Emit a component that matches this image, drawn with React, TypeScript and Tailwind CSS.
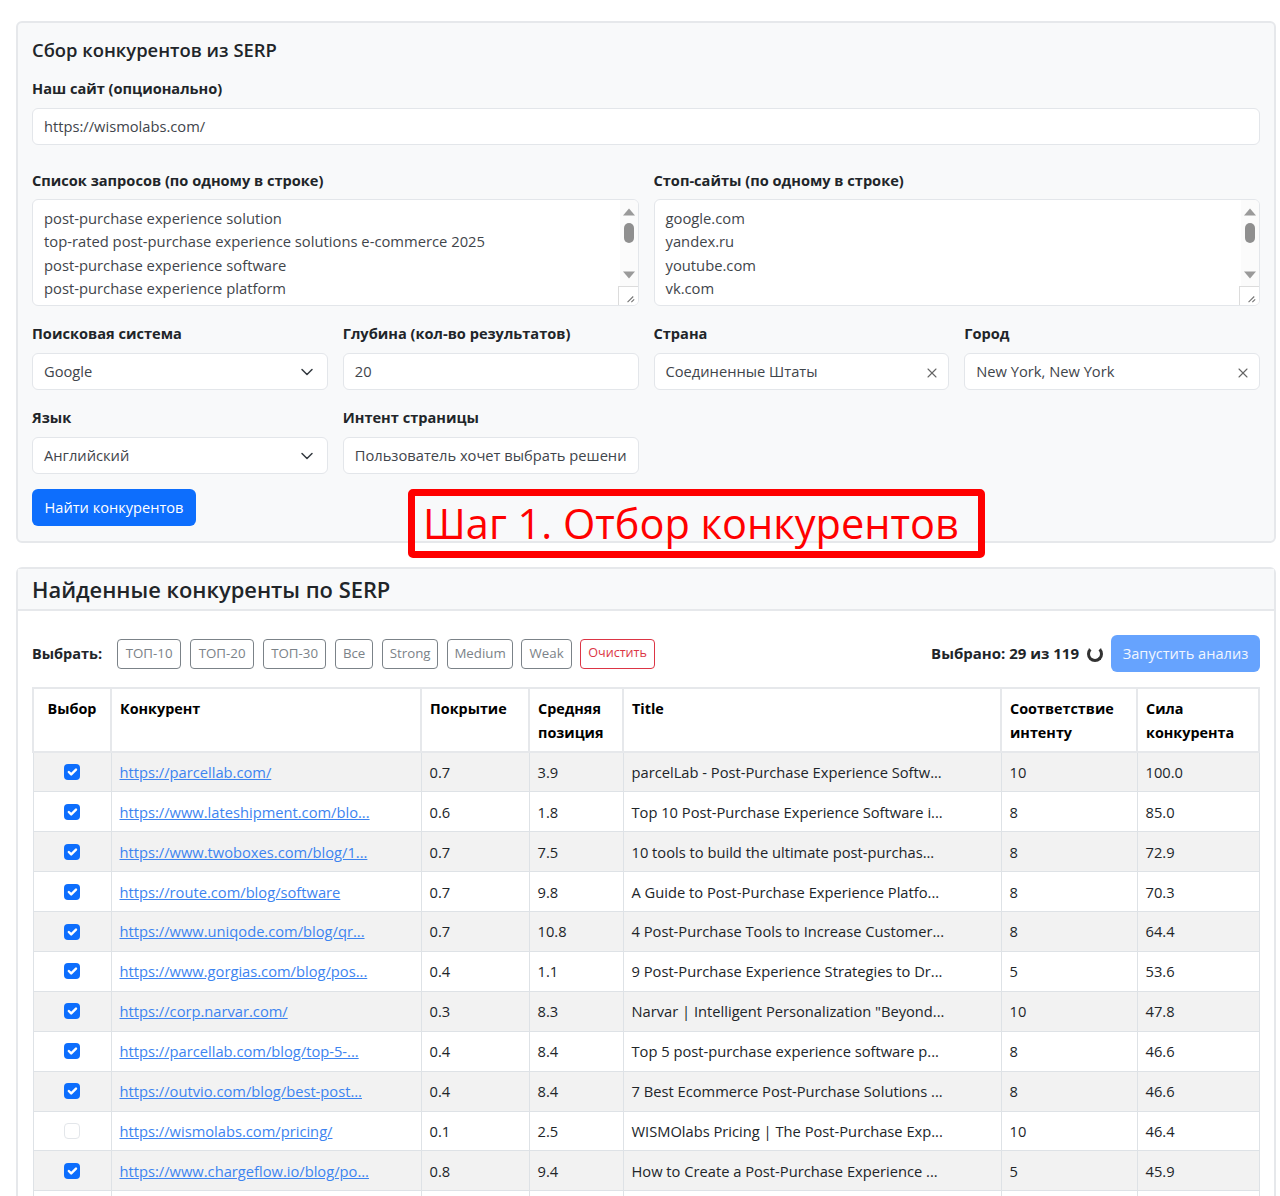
import { ReactNode } from "react";
import { ChevronDown, X } from "lucide-react";

const rows = [
  { on: true, url: "https://parcellab.com/", cov: "0.7", pos: "3.9", title: "parcelLab - Post-Purchase Experience Softw...", fit: "10", power: "100.0" },
  { on: true, url: "https://www.lateshipment.com/blo...", cov: "0.6", pos: "1.8", title: "Top 10 Post-Purchase Experience Software i...", fit: "8", power: "85.0" },
  { on: true, url: "https://www.twoboxes.com/blog/1...", cov: "0.7", pos: "7.5", title: "10 tools to build the ultimate post-purchas...", fit: "8", power: "72.9" },
  { on: true, url: "https://route.com/blog/software", cov: "0.7", pos: "9.8", title: "A Guide to Post-Purchase Experience Platfo...", fit: "8", power: "70.3" },
  { on: true, url: "https://www.uniqode.com/blog/qr...", cov: "0.7", pos: "10.8", title: "4 Post-Purchase Tools to Increase Customer...", fit: "8", power: "64.4" },
  { on: true, url: "https://www.gorgias.com/blog/pos...", cov: "0.4", pos: "1.1", title: "9 Post-Purchase Experience Strategies to Dr...", fit: "5", power: "53.6" },
  { on: true, url: "https://corp.narvar.com/", cov: "0.3", pos: "8.3", title: 'Narvar | Intelligent Personalization "Beyond...', fit: "10", power: "47.8" },
  { on: true, url: "https://parcellab.com/blog/top-5-...", cov: "0.4", pos: "8.4", title: "Top 5 post-purchase experience software p...", fit: "8", power: "46.6" },
  { on: true, url: "https://outvio.com/blog/best-post...", cov: "0.4", pos: "8.4", title: "7 Best Ecommerce Post-Purchase Solutions ...", fit: "8", power: "46.6" },
  { on: false, url: "https://wismolabs.com/pricing/", cov: "0.1", pos: "2.5", title: "WISMOlabs Pricing | The Post-Purchase Exp...", fit: "10", power: "46.4" },
  { on: true, url: "https://www.chargeflow.io/blog/po...", cov: "0.8", pos: "9.4", title: "How to Create a Post-Purchase Experience ...", fit: "5", power: "45.9" },
];

const queries = [
  "post-purchase experience solution",
  "top-rated post-purchase experience solutions e-commerce 2025",
  "post-purchase experience software",
  "post-purchase experience platform",
];
const stopSites = ["google.com", "yandex.ru", "youtube.com", "vk.com"];

function Label({ children, loose }: { children: ReactNode; loose?: boolean }) {
  return (
    <div className={loose ? "mb-[10px] h-[20px] text-[14.6px] leading-[20px] font-bold text-[#212529]" : "mb-[9px] h-[20px] text-[14.6px] leading-[20px] font-bold text-[#212529]"}>
      {children}
    </div>
  );
}

function Field({ children }: { children: ReactNode }) {
  return (
    <div className="flex h-[37px] items-center justify-between overflow-hidden rounded-[6px] border border-[#e3e6ea] bg-white px-[11px] text-[14.7px] text-[#3f454b]">
      {children}
    </div>
  );
}

function TextBox({ lines }: { lines: string[] }) {
  return (
    <div className="relative h-[107px] overflow-hidden rounded-[6px] border border-[#e3e6ea] bg-white px-[11px] pt-[7px] text-[14.77px] leading-[23.3px] text-[#3f454b]">
      {lines.map((l) => (
        <div key={l}>{l}</div>
      ))}
      <div className="absolute top-0 right-0 bottom-0 w-[18px] bg-[#fbfbfb]">
        <svg className="absolute top-[8px] left-[3px]" width="12" height="8" viewBox="0 0 12 8">
          <path d="M6 0.5 12 7.5H0Z" fill="#9a9a9a" />
        </svg>
        <div className="absolute top-[23px] left-[4px] h-[20px] w-[10px] rounded-[5px] bg-[#8f8f8f]" />
        <svg className="absolute top-[71px] left-[3px]" width="12" height="8" viewBox="0 0 12 8">
          <path d="M0 0.5H12L6 7.5Z" fill="#9a9a9a" />
        </svg>
        <svg className="absolute right-0 bottom-0 border-t border-l border-[#dcdcdc] bg-white" width="20" height="19" viewBox="0 0 20 19">
          <path d="M9 16 15 10M13 16 16 13" stroke="#777" strokeWidth="1.2" fill="none" />
        </svg>
      </div>
    </div>
  );
}

function SmallButton({ children, w }: { children: ReactNode; w: string }) {
  return (
    <button className={`flex h-[30px] items-center justify-center rounded-[4px] border border-[#7b8288] text-[13.3px] text-[#7b8288] ${w}`}>
      {children}
    </button>
  );
}

function Check({ on }: { on: boolean }) {
  if (!on) return <div className="mx-auto h-[16px] w-[16px] rounded-[4px] border border-[#e3e6ea] bg-white" />;
  return (
    <div className="mx-auto flex h-[16px] w-[16px] items-center justify-center rounded-[4px] bg-[#0d6efd]">
      <svg width="16" height="16" viewBox="0 0 20 20">
        <path d="M6 10l3 3 6-6" fill="none" stroke="#fff" strokeWidth="3" strokeLinecap="round" strokeLinejoin="round" />
      </svg>
    </div>
  );
}

export default function App() {
  return (
    <div className="relative h-[1196px] overflow-hidden bg-white pt-[21px] pr-[4px] pl-[16px] font-['Open_Sans',sans-serif] text-[#212529]">
      {/* форма */}
      <div className="h-[522px] rounded-[6px] border-2 border-[#e6e8eb] bg-[#f8f9fa] px-[14px] pt-[13px]">
        <h5 className="mb-[14px] h-[28px] text-[18.4px] leading-[28px] font-semibold">Сбор конкурентов из SERP</h5>
        <Label>Наш сайт (опционально)</Label>
        <div className="pt-px">
          <Field>https://wismolabs.com/</Field>
        </div>
        <div className="mt-[25px] grid grid-cols-2 gap-x-[15px]">
          <div>
            <Label>Список запросов (по одному в строке)</Label>
            <TextBox lines={queries} />
          </div>
          <div>
            <Label>Стоп-сайты (по одному в строке)</Label>
            <TextBox lines={stopSites} />
          </div>
        </div>
        <div className="mt-[17px] grid grid-cols-4 gap-x-[15px] gap-y-[17px]">
          <div>
            <Label loose>Поисковая система</Label>
            <Field>
              Google
              <ChevronDown size={20} strokeWidth={1.8} className="mr-[-1px] text-[#343a40]" />
            </Field>
          </div>
          <div>
            <Label loose>Глубина (кол-во результатов)</Label>
            <Field>20</Field>
          </div>
          <div>
            <Label loose>Страна</Label>
            <Field>
              Соединенные Штаты
              <X size={16} strokeWidth={1.6} className="mt-[3px] mr-[-3px] text-[#666]" />
            </Field>
          </div>
          <div>
            <Label loose>Город</Label>
            <Field>
              New York, New York
              <X size={16} strokeWidth={1.6} className="mt-[3px] mr-[-3px] text-[#666]" />
            </Field>
          </div>
          <div>
            <Label loose>Язык</Label>
            <Field>
              Английский
              <ChevronDown size={20} strokeWidth={1.8} className="mr-[-1px] text-[#343a40]" />
            </Field>
          </div>
          <div>
            <Label loose>Интент страницы</Label>
            <Field>
              <span className="overflow-hidden whitespace-nowrap">Пользователь хочет выбрать решение для</span>
            </Field>
          </div>
        </div>
        <button className="mt-[15px] flex h-[37px] w-[164px] items-center justify-center rounded-[6px] bg-[#0d6efd] text-[14.6px] text-white">
          Найти конкурентов
        </button>
      </div>

      {/* подпись поверх скриншота */}
      <div className="absolute top-[489px] left-[408px] flex h-[69px] w-[577px] items-center rounded-[5px] border-[7px] border-[#ff0000] pl-[8px] text-[41.5px] whitespace-nowrap text-[#ff0000]">
        Шаг 1. Отбор конкурентов
      </div>

      {/* результаты */}
      <div className="mt-[24px] rounded-[6px] border-2 border-[#e6e8eb] bg-white">
        <div className="flex h-[42px] items-center border-b-2 border-[#e6e8eb] bg-[#f8f9fa] px-[14px] pt-[2px] text-[21.9px] font-semibold">
          Найденные конкуренты по SERP
        </div>
        <div className="px-[14px] pt-[24px]">
          <div className="flex h-[37px] items-center">
            <span className="mr-[15px] text-[14.5px] font-bold">Выбрать:</span>
            <div className="flex gap-[9px]">
              <SmallButton w="w-[64px]">ТОП-10</SmallButton>
              <SmallButton w="w-[64px]">ТОП-20</SmallButton>
              <SmallButton w="w-[63px]">ТОП-30</SmallButton>
              <SmallButton w="w-[38px]">Все</SmallButton>
              <SmallButton w="w-[56px]">Strong</SmallButton>
              <SmallButton w="w-[66px]">Medium</SmallButton>
              <SmallButton w="ml-[-1px] w-[51px]">Weak</SmallButton>
              <button className="ml-[-1px] flex h-[30px] w-[75px] items-center justify-center rounded-[4px] border border-[#dc3545] text-[12.6px] text-[#dc3545]">
                Очистить
              </button>
            </div>
            <span className="ml-auto text-[15px] font-bold">Выбрано: 29 из 119</span>
            <div className="mx-[8px] h-[16px] w-[16px] rounded-full border-[3px] border-[#333] border-t-transparent" />
            <button className="flex h-[37px] w-[149px] items-center justify-center rounded-[6px] bg-[#66a3fe] text-[14.6px] text-[#f1f6ff]">
              Запустить анализ
            </button>
          </div>

          <table className="mt-[15px] w-[1226px] table-fixed border-collapse text-[14.7px]">
            <colgroup>
              <col className="w-[78px]" />
              <col className="w-[310px]" />
              <col className="w-[108px]" />
              <col className="w-[94px]" />
              <col className="w-[378px]" />
              <col className="w-[136px]" />
              <col className="w-[122px]" />
            </colgroup>
            <thead>
              <tr className="h-[64px] align-top text-[14.4px] leading-[24px] font-bold text-black">
                <th className="border-2 border-[#e6e8eb] pt-[8px] text-center">Выбор</th>
                <th className="border-2 border-[#e6e8eb] px-[8px] pt-[8px] text-left">Конкурент</th>
                <th className="border-2 border-[#e6e8eb] px-[8px] pt-[8px] text-left">Покрытие</th>
                <th className="border-2 border-[#e6e8eb] px-[8px] pt-[8px] text-left">
                  Средняя
                  <br />
                  позиция
                </th>
                <th className="border-2 border-[#e6e8eb] px-[8px] pt-[8px] text-left">Title</th>
                <th className="border-2 border-[#e6e8eb] px-[8px] pt-[8px] text-left">
                  Соответствие
                  <br />
                  интенту
                </th>
                <th className="border-2 border-[#e6e8eb] px-[8px] pt-[8px] text-left">
                  Сила
                  <br />
                  конкурента
                </th>
              </tr>
            </thead>
            <tbody>
              {rows.map((r, i) => (
                <tr key={r.url} className={i % 2 === 0 ? "h-[39.9px] bg-[#f2f2f2]" : "h-[39.9px] bg-white"}>
                  <td className="border border-[#dee2e6]">
                    <Check on={r.on} />
                  </td>
                  <td className="border border-[#dee2e6] px-[8px] whitespace-nowrap">
                    <a href="#" className="text-[#3d84f0] underline">
                      {r.url}
                    </a>
                  </td>
                  <td className="border border-[#dee2e6] px-[8px]">{r.cov}</td>
                  <td className="border border-[#dee2e6] px-[8px]">{r.pos}</td>
                  <td className="border border-[#dee2e6] px-[8px] whitespace-nowrap">{r.title}</td>
                  <td className="border border-[#dee2e6] px-[8px]">{r.fit}</td>
                  <td className="border border-[#dee2e6] px-[8px]">{r.power}</td>
                </tr>
              ))}
              <tr className="h-[39.9px]">
                <td className="border border-[#dee2e6]" />
                <td className="border border-[#dee2e6]" />
                <td className="border border-[#dee2e6]" />
                <td className="border border-[#dee2e6]" />
                <td className="border border-[#dee2e6]" />
                <td className="border border-[#dee2e6]" />
                <td className="border border-[#dee2e6]" />
              </tr>
            </tbody>
          </table>
        </div>
      </div>
    </div>
  );
}
